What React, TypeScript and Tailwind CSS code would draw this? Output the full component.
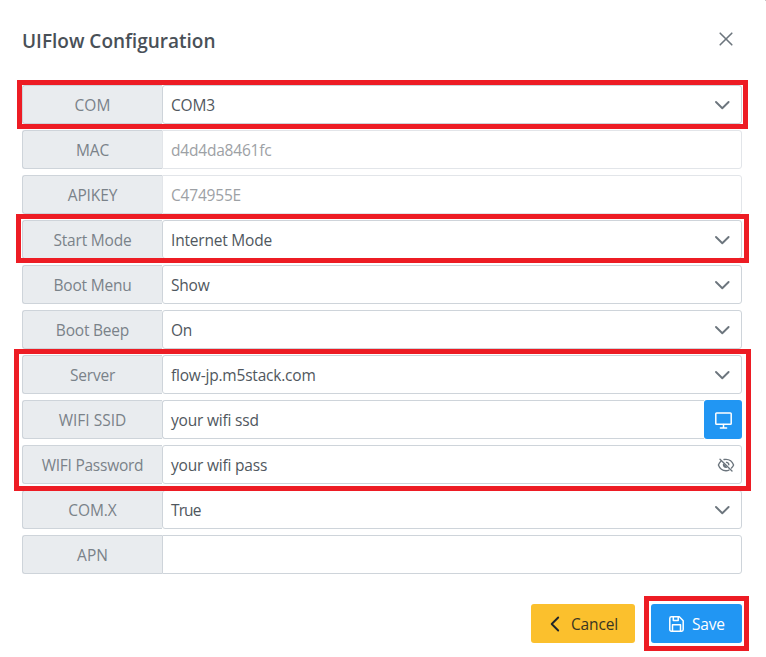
import React from "react";

type Kind = "select" | "disabled" | "text" | "password" | "scan";

interface Field {
  label: string;
  labelClass: string;
  value: string;
  valueClass: string;
  kind: Kind;
}

const fields: Field[] = [
  { label: "COM", labelClass: "tracking-[0px]", value: "COM3", valueClass: "tracking-[-0.2px]", kind: "select" },
  { label: "MAC", labelClass: "tracking-[-0.1px]", value: "d4d4da8461fc", valueClass: "tracking-[-0.2px]", kind: "disabled" },
  { label: "APIKEY", labelClass: "tracking-[-0.1px]", value: "C474955E", valueClass: "tracking-[-0.2px]", kind: "disabled" },
  { label: "Start Mode", labelClass: "tracking-[-0.2px]", value: "Internet Mode", valueClass: "tracking-[-0.2px]", kind: "select" },
  { label: "Boot Menu", labelClass: "tracking-[-0.2px]", value: "Show", valueClass: "tracking-[-0.2px]", kind: "select" },
  { label: "Boot Beep", labelClass: "tracking-[-0.2px]", value: "On", valueClass: "tracking-[-0.2px]", kind: "select" },
  { label: "Server", labelClass: "tracking-[-0.2px]", value: "flow-jp.m5stack.com", valueClass: "tracking-[-0.2px]", kind: "select" },
  { label: "WIFI SSID", labelClass: "tracking-[0px]", value: "your wifi ssd", valueClass: "tracking-[-0.2px]", kind: "scan" },
  { label: "WIFI Password", labelClass: "tracking-[-0.25px]", value: "your wifi pass", valueClass: "tracking-[-0.2px]", kind: "password" },
  { label: "COM.X", labelClass: "tracking-[-0.1px]", value: "True", valueClass: "tracking-[-0.9px]", kind: "select" },
  { label: "APN", labelClass: "tracking-[0px]", value: "", valueClass: "", kind: "text" },
];

const controlClass: Record<Kind, string> = {
  select: "rounded-[3px] border-[#ced4da]",
  disabled: "rounded-r-[3px] border-[#e2e5e9]",
  text: "rounded-r-[3px] border-[#ced4da]",
  password: "rounded-[3px] border-[#ced4da]",
  scan: "rounded-l-[3px] border-r-0 border-[#ced4da]",
};

function ChevronDown() {
  return (
    <svg className="mr-[11px] h-[10px] w-4 shrink-0" viewBox="0 0 16 10" fill="none" stroke="#6c757d" strokeWidth="1.9" strokeLinecap="round" strokeLinejoin="round">
      <path d="M2 2 8.300 8.200 14.600 2" />
    </svg>
  );
}

function EyeSlash() {
  return (
    <svg className="mr-[6px] h-4 w-[18px] shrink-0" viewBox="0 0 18 16" fill="none" stroke="#6c757d" strokeWidth="1.35" strokeLinecap="round" strokeLinejoin="round">
      <path d="M7 2.500c.6-.1 1.300-.2 2-.2 3.800 0 6.500 2.700 7.600 5.700-.5 1.200-1.200 2.200-2.100 3M12 13.100c-1 .4-2 .6-3 .6-3.700 0-6.500-2.700-7.600-5.700.6-1.500 1.500-2.800 2.700-3.900" />
      <path d="M3 2.200 15 14M9.500 5.300c1.300.1 2.300 1.200 2.300 2.500" />
      <path d="M6.500 7.200c-.2 1.900.9 3.300 2.900 3.200Z" fill="#6c757d" fillOpacity="0.35" />
    </svg>
  );
}

function Desktop() {
  return (
    <svg className="h-[17px] w-[17px]" viewBox="0 0 17 17" fill="none" stroke="white" strokeWidth="1.5" strokeLinecap="round" strokeLinejoin="round">
      <rect x="0.8" y="0.9" width="15.400" height="11.400" rx="0.8" />
      <path d="M8.500 12.500v3M5.400 15.900h6.200" />
    </svg>
  );
}

function FieldRow({ label, labelClass, value, valueClass, kind }: Field) {
  return (
    <div className="flex h-[39px]">
      <div className="flex w-[140px] shrink-0 items-center justify-center rounded-l-[3px] border border-r-0 border-[#ced4da] bg-[#e9ecef] pt-px text-[#7a8289]">
        <span className={labelClass}>{label}</span>
      </div>
      <div className={`flex min-w-0 flex-1 items-center justify-between border bg-white pl-2 ${controlClass[kind]} ${kind === "disabled" ? "text-[#9da1a5]" : "text-[#50575e]"}`}>
        <span className={`pt-px ${valueClass}`}>{value}</span>
        {kind === "select" && <ChevronDown />}
        {kind === "password" && <EyeSlash />}
      </div>
      {kind === "scan" && (
        <button className="flex w-[38px] items-center justify-center rounded-[3px] bg-[#2196f3] pt-px">
          <Desktop />
        </button>
      )}
    </div>
  );
}

export default function App() {
  return (
    <div className="relative h-[657px] w-[766px] overflow-hidden bg-white pr-6 pl-[22px] font-['Open_Sans','Noto_Sans',sans-serif] text-[15.5px] leading-6">
      <header className="flex h-[85px] items-start justify-between">
        <h1 className="mt-[27px] text-[19px] leading-7 font-semibold tracking-[0px] whitespace-nowrap text-[#495057]">UIFlow Configuration</h1>
        <button className="mt-8 mr-2 ml-4">
          <svg className="h-[14px] w-[16px]" viewBox="0 0 16 14" fill="none" stroke="#6c757d" strokeWidth="1.6" strokeLinecap="round">
            <path d="m2.200 1.200 11.600 11.600M13.800 1.200 2.200 12.800" />
          </svg>
        </button>
      </header>
      <main className="flex flex-col gap-1.5 whitespace-nowrap">
        {fields.map((f) => (
          <FieldRow key={f.label} {...f} />
        ))}
      </main>
      <footer className="mt-[30px] flex justify-end gap-4">
        <button className="flex h-[39px] w-[104px] items-center rounded-[3px] bg-[#fbc02d] pl-[19px] text-[#212529]">
          <svg className="h-4 w-[10px]" viewBox="0 0 10 16" fill="none" stroke="#212529" strokeWidth="1.9" strokeLinecap="round" strokeLinejoin="round">
            <path d="M8.200 1.500 1.700 8l6.500 6.500" />
          </svg>
          <span className="ml-[11px] pt-px tracking-[-0.15px] text-[#3a3622]">Cancel</span>
        </button>
        <button className="flex h-[39px] w-[91px] items-center rounded-[3px] bg-[#2196f3] pl-[18px] text-white">
          <svg className="h-4 w-[15px]" viewBox="0 0 15 16" fill="none" stroke="white" strokeWidth="1.5" strokeLinejoin="round">
            <path d="M2.400.8h7.900l3.900 3.900v8.900c0 1-.6 1.600-1.600 1.600H2.400c-1 0-1.600-.6-1.600-1.600V2.400C.8 1.400 1.400.8 2.400.8Z" />
            <path d="M3.500 15V8.700h8V15M4.300 1v3.400h4.900V1" />
          </svg>
          <span className="ml-2 pt-px tracking-[-0.2px]">Save</span>
        </button>
      </footer>
      <div className="pointer-events-none absolute top-[80px] left-[17px] h-[49px] w-[731px] border-5 border-[#ed1c24]" />
      <div className="pointer-events-none absolute top-[214px] left-[16px] h-[49px] w-[733px] border-5 border-[#ed1c24]" />
      <div className="pointer-events-none absolute top-[349px] left-[14px] h-[142px] w-[737px] border-5 border-[#ed1c24]" />
      <div className="pointer-events-none absolute top-[596px] left-[644px] h-[55px] w-[105px] border-5 border-[#ed1c24]" />
      <div className="pointer-events-none absolute top-0 right-0 size-px bg-[#c8c8c8]" />
    </div>
  );
}
